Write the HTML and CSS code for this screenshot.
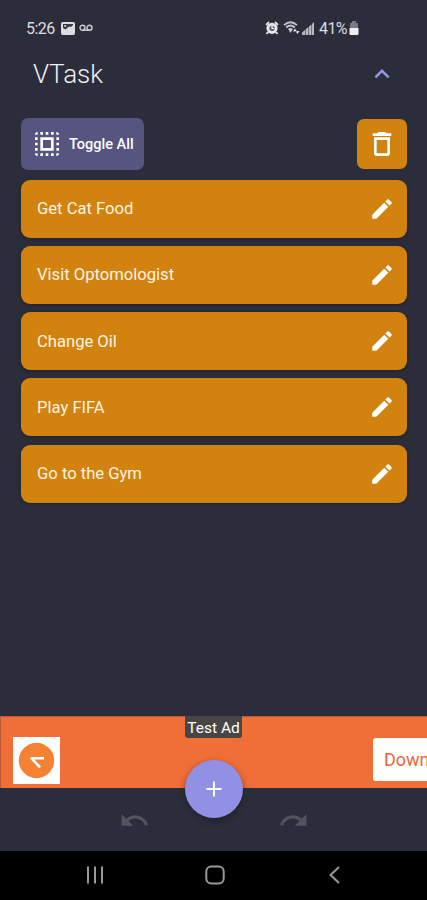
FILE: index.html
```html
<!DOCTYPE html>
<html lang="en">
<head>
<meta charset="utf-8">
<title>VTask</title>
<link rel="stylesheet" href="styles.css">
</head>
<body>
<svg class="defs" width="0" height="0" aria-hidden="true">
  <symbol id="pencil" viewBox="0 0 24 24"><path d="M3 17.25V21h3.75L17.81 9.94l-3.75-3.75L3 17.25zM20.71 7.04a1 1 0 0 0 0-1.41l-2.34-2.34a1 1 0 0 0-1.41 0l-1.83 1.83 3.75 3.75 1.83-1.83z"/></symbol>
</svg>
<div class="phone">
  <div class="status">
    <span class="time">5:26</span>
    <svg class="photo" width="14" height="13" viewBox="0 0 14 13"><rect width="14" height="13" rx="2" fill="#dcdde3"/><path d="M2 9V6l2.500 1.500L8 4.500l2 .5 2-2V2H2z" fill="#343744"/><circle cx="4.200" cy="4" r="1" fill="#dcdde3"/></svg>
    <svg class="voicemail" width="14" height="8" viewBox="0 0 14 8" fill="none" stroke="#c9cad2" stroke-width="1.4"><circle cx="3.5" cy="3.7" r="2.5"/><circle cx="10.5" cy="3.7" r="2.5"/><path d="M3.5 6.2h7"/></svg>
    <span class="spacer"></span>
    <svg class="alarm" width="14" height="14" viewBox="0 0 14 14"><path d="M1 3.8 4 1M13 3.8 10 1M3 11l-1.500 2M11 11l1.500 2" stroke="#e4e5ea" stroke-width="1.8"/><circle cx="7" cy="7.3" r="5.6" fill="#e4e5ea"/><circle cx="7" cy="7.3" r="2.600" fill="#555864"/><path d="M7 5v2.500h2" fill="none" stroke="#fff" stroke-width="1.2"/></svg>
    <svg class="wifi" width="17" height="14" viewBox="0 0 17 14"><path d="M1 4.2Q7.5-1.8 14 4.2M3.2 6.5q4.300-4 8.600 0" fill="none" stroke="#bfc1ca" stroke-width="1.8"/><path d="M5 8q2.500-2 5 0l-2.500 4z" fill="#bfc1ca"/><path d="m10 10.500 2-3 2 3zM12.500 10l2 3 2-3z" fill="#e4e5ea"/></svg>
    <svg class="signal" width="12" height="13" viewBox="0 0 12 13"><path d="M0 13v-2.500L3 8v5zM3.500 13V7.500L6.500 5v8zM7 13V4.500L9.500 2.500V13zM10 13V2l2-2v13z" fill="#b5b7c1"/></svg>
    <span class="percent">41%</span>
    <svg class="battery" width="10" height="14" viewBox="0 0 10 14"><path d="M1 2h2V0h4v2h2v5H1z" fill="#777984"/><path d="M.5 7h9v6a1 1 0 0 1-1 1h-7a1 1 0 0 1-1-1z" fill="#eeeef2"/></svg>
  </div>
  <header class="header">
    <h1>VTask</h1>
    <svg width="30" height="30" viewBox="0 0 24 24" fill="#9a96e8"><path d="m12 8-6 6 1.410 1.410L12 10.830l4.590 4.580L18 14z"/></svg>
  </header>
  <div class="tools">
    <button class="toggle">
      <svg width="32" height="32" viewBox="0 0 24 24" fill="#fff"><path d="M3 5h2V3a2 2 0 0 0-2 2zm0 8h2v-2H3v2zm4 8h2v-2H7v2zM3 9h2V7H3v2zm10-6h-2v2h2V3zm6 0v2h2a2 2 0 0 0-2-2zM5 21v-2H3a2 2 0 0 0 2 2zm-2-4h2v-2H3v2zM9 3H7v2h2V3zm2 18h2v-2h-2v2zm8-8h2v-2h-2v2zm0 8a2 2 0 0 0 2-2h-2v2zm0-12h2V7h-2v2zm0 8h2v-2h-2v2zm-4 4h2v-2h-2v2zm0-16h2V3h-2v2zM7 17h10V7H7v10zm2-8h6v6H9V9z"/></svg>
      <span>Toggle All</span>
    </button>
    <button class="trash" aria-label="Delete">
      <svg width="32" height="32" viewBox="0 0 24 24" fill="#fff"><path d="M6 19c0 1.100.9 2 2 2h8c1.100 0 2-.9 2-2V7H6v12zM8 9h8v10H8V9zm7.500-5-1-1h-5l-1 1H5v2h14V4z"/></svg>
    </button>
  </div>
  <main class="tasks">
    <div class="task"><span>Get Cat Food</span><svg class="edit"><use href="#pencil"/></svg></div>
    <div class="task"><span>Visit Optomologist</span><svg class="edit"><use href="#pencil"/></svg></div>
    <div class="task"><span>Change Oil</span><svg class="edit"><use href="#pencil"/></svg></div>
    <div class="task"><span>Play FIFA</span><svg class="edit"><use href="#pencil"/></svg></div>
    <div class="task"><span>Go to the Gym</span><svg class="edit"><use href="#pencil"/></svg></div>
  </main>
  <section class="ad">
    <svg class="ad-logo" width="47" height="47" viewBox="0 0 47 47"><path d="M0 0h47v47H0z" fill="#fff"/><circle cx="23.500" cy="23.500" r="17.700" fill="#f58233"/><path d="M31 21.300H18.500l8.500 9" fill="none" stroke="#fff" stroke-width="2.600" stroke-linejoin="round"/></svg>
    <span class="ad-tag">Test Ad</span>
    <span class="download">Down</span>
  </section>
  <footer class="actions">
    <svg class="undo" width="31" height="31" viewBox="0 0 24 24"><path d="M12.500 8c-2.650 0-5.050.99-6.900 2.600L2 7v9h9l-3.620-3.620c1.390-1.160 3.160-1.880 5.120-1.880 3.540 0 6.550 2.310 7.600 5.500l2.370-.78C21.080 11.030 17.150 8 12.500 8z"/></svg>
    <button class="fab" aria-label="Add"><svg width="26" height="26" viewBox="0 0 24 24" fill="#fff"><path d="M19 12.900h-6.100V19h-1.800v-6.100H5v-1.800h6.100V5h1.800v6.100H19z"/></svg></button>
    <svg class="redo" width="31" height="31" viewBox="0 0 24 24"><path d="M18.400 10.600C16.550 8.990 14.150 8 11.500 8c-4.650 0-8.580 3.030-9.960 7.220L3.900 16c1.050-3.190 4.050-5.500 7.600-5.500 1.950 0 3.730.72 5.120 1.880L13 16h9V7l-3.600 3.600z"/></svg>
  </footer>
  <nav class="nav">
    <svg width="20" height="20" viewBox="0 0 20 20"><path d="M3 1.500v17M10 1.500v17M17 1.500v17"/></svg>
    <svg width="20" height="20" viewBox="0 0 20 20"><rect x="1.300" y="1.500" width="17.400" height="17" rx="5"/></svg>
    <svg width="20" height="20" viewBox="0 0 20 20"><path d="m14 2-8.500 8 8.500 8"/></svg>
  </nav>
</div>
</body>
</html>
```
FILE: styles.css
```css
* { box-sizing: border-box; }
body { margin: 0; background: #2b2d3a; font-family: Roboto, sans-serif; color: #fff; }
button { border: 0; padding: 0; font: inherit; color: inherit; }
svg { display: block; flex: none; }
.defs { position: absolute; }
.phone { width: 427px; height: 900px; display: flex; flex-direction: column; overflow: hidden; }
.status { height: 50px; padding: 6px 68px 0 26px; display: flex; align-items: center; font-size: 16px; color: #dcdde3; }
.time { width: 30px; letter-spacing: -0.5px; }
.photo { margin-left: 5px; }
.voicemail { margin-left: 4px; }
.spacer { flex: 1; }
.wifi { margin-left: 4px; }
.signal { margin-left: 2px; }
.percent { width: 29px; margin-left: 5px; letter-spacing: -0.6px; }
.battery { margin-left: 1px; }
.header { height: 48px; padding: 0 30px 0 33px; display: flex; align-items: center; justify-content: space-between; }
h1 { margin: 0; font-size: 26px; font-weight: 300; color: #f0f0f4; }
.tools { height: 52px; margin: 20px 20px 0 21px; display: flex; align-items: center; justify-content: space-between; }
.toggle { width: 123px; height: 52px; border-radius: 7px; background: #55557f; display: flex; align-items: center; padding-left: 10px; gap: 6px; font-size: 14.5px; font-weight: 500; white-space: nowrap; }
.trash { width: 50px; height: 50px; border-radius: 7px; background: #d2820e; display: flex; align-items: center; justify-content: center; }
.tasks { margin: 9.500px 20px 0 21px; display: flex; flex-direction: column; gap: 8.300px; flex: 1; }
.task { height: 58px; border-radius: 9px; background: #d2820e; box-shadow: 0 1px 3px #1f212b; padding: 0 12px 0 16px; display: flex; align-items: center; justify-content: space-between; font-size: 16.6px; color: #fff4e2; }
.edit { width: 26px; height: 26px; fill: #fff; }
.ad { height: 72px; background: #f06e38; display: flex; position: relative; border-left: 1px solid #b65a38; border-top: 1px solid #b65a38; }
.ad-logo { margin: 20px 0 0 12px; }
.ad-tag { position: absolute; left: 184px; top: -1px; width: 57px; height: 22px; border-radius: 0 0 3px 3px; background: #484644; font-size: 15.5px; line-height: 24px; text-align: center; white-space: nowrap; }
.download { margin: 21px 0 0 auto; width: 54px; height: 43px; border-radius: 3px 0 0 3px; background: #fff; color: #ec6637; font-size: 18px; line-height: 43px; padding-left: 11px; overflow: hidden; }
.actions { height: 63px; display: flex; justify-content: center; position: relative; }
.undo, .redo { fill: #51535f; margin-top: 17px; }
.fab { width: 58px; height: 58px; margin: -28px 35px 0 35px; border-radius: 50%; background: #9290e4; display: flex; align-items: center; justify-content: center; box-shadow: 0 3px 6px #1a1b2499; position: relative; }
.nav { height: 49px; background: #000; display: flex; justify-content: center; gap: 100px; padding: 14px 0 0 3px; }
.nav svg { fill: none; stroke: #999; stroke-width: 2; }
```
